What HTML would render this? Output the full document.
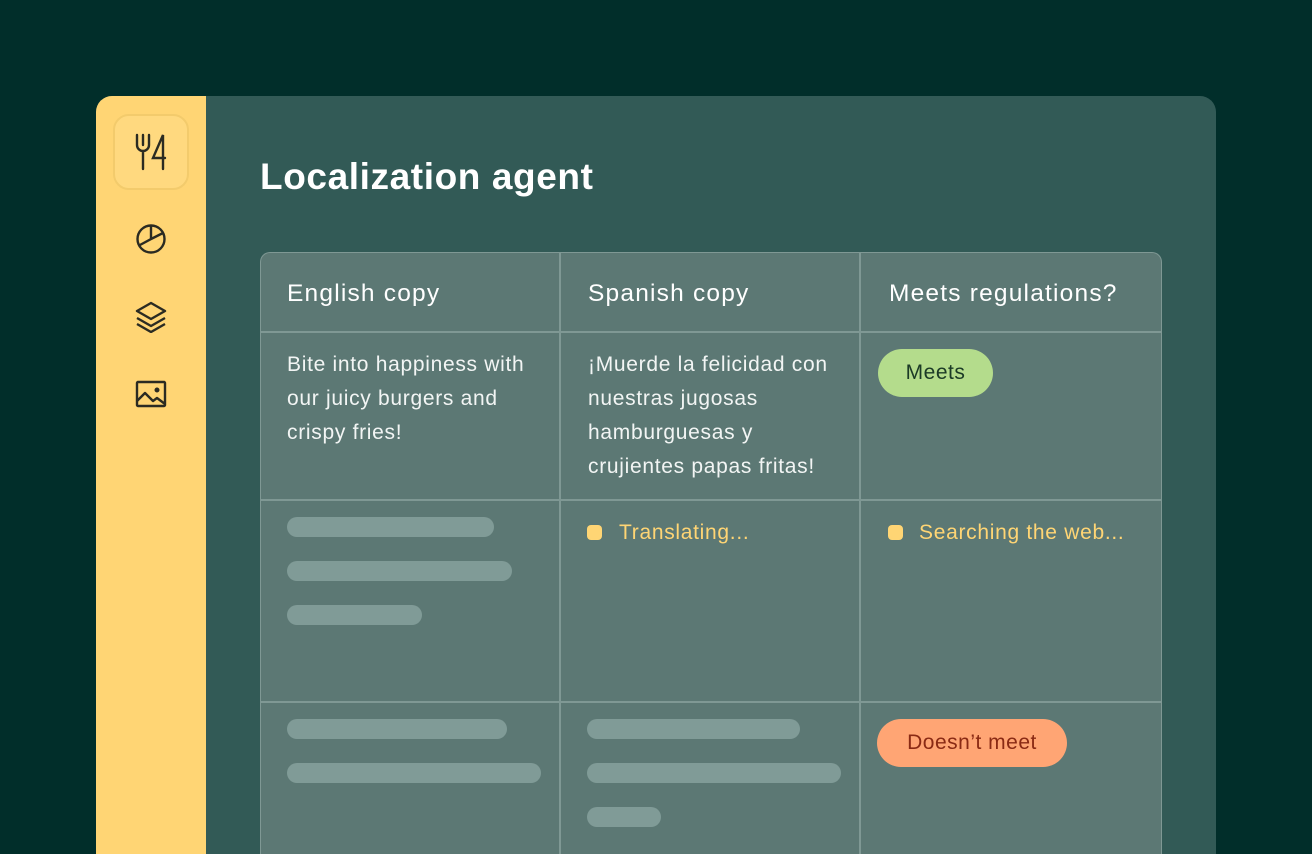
<!DOCTYPE html><html><head><style>
*{margin:0;padding:0;box-sizing:border-box}
html,body{width:1312px;height:854px;overflow:hidden}
body{background:#012e2a;position:relative;font-family:"Liberation Sans",sans-serif}
.card{position:absolute;left:96px;top:96px;width:1120px;height:758px;border-radius:16px 16px 0 0;background:#325a56;overflow:hidden}
.side{position:absolute;left:0;top:0;width:110px;height:758px;background:#ffd574}
.sel{position:absolute;left:17px;top:18px;width:76px;height:76px;border-radius:16px;background:#ffd97f;border:2px solid #f3cb6c}
.ic{position:absolute}
h1{position:absolute;left:164px;top:60px;color:#fff;font-size:37px;font-weight:bold;letter-spacing:0.6px}
.t{position:absolute;left:164px;top:156px;width:902px;height:602px;background:#5c7874;border:1.5px solid #7f9894;border-bottom:none;border-radius:10px 10px 0 0}
.v{position:absolute;top:0;bottom:0;width:1.5px;background:#7f9894}
.h{position:absolute;left:0;right:0;height:1.5px;background:#7f9894}
.tx{position:absolute;color:#f2f5f4;font-size:21px;line-height:34px;letter-spacing:0.7px;white-space:nowrap}
.hd{font-size:24.5px;color:#fff;letter-spacing:1.2px}
.bar{position:absolute;height:20px;border-radius:10px;background:#809b97}
.y{position:absolute;color:#ffd574;font-size:21px;letter-spacing:0.7px}
.dot{position:absolute;width:15px;height:15px;border-radius:4px;background:#ffd574}
.pill{position:absolute;height:48px;border-radius:24px;font-size:21px;line-height:48px;text-align:center;letter-spacing:0.5px}
</style></head><body>
<div class="card">
<div class="side">
<div class="sel"></div>
<svg class="ic" style="left:38px;top:36px" width="34" height="40" viewBox="0 0 34 40" fill="none" stroke="#2b2b22" stroke-width="2.4" stroke-linecap="round"><path d="M3 3v10a6 6 0 0 0 12 0V3M9 3v10M9 19v18M29 37V3L19 26h12"/></svg>
<svg class="ic" style="left:39px;top:127px" width="32" height="32" viewBox="0 0 32 32" fill="none" stroke="#2b2b22" stroke-width="2.4"><circle cx="16" cy="16" r="13.5"/><path d="M16 2.5V16L4 22.5M16 16l12-6"/></svg>
<svg class="ic" style="left:38px;top:205px" width="34" height="32" viewBox="0 0 34 32" fill="none" stroke="#2b2b22" stroke-width="2.4" stroke-linejoin="round"><path d="M17 2L3 10l14 8 14-8zM3 17l14 8 14-8M3 23l14 8 14-8"/></svg>
<svg class="ic" style="left:39px;top:284px" width="32" height="28" viewBox="0 0 32 28" fill="none" stroke="#2b2b22" stroke-width="2.4" stroke-linejoin="round"><rect x="2" y="2" width="28" height="24" rx="1"/><path d="M2 21l8-8 8 8 4-3 8 6"/><circle cx="22" cy="10" r="1.3" fill="#2b2b22"/></svg>
</div>
<h1>Localization agent</h1>
<div class="t">
<div class="v" style="left:298px"></div><div class="v" style="left:598px"></div>
<div class="h" style="top:78px"></div><div class="h" style="top:246px"></div><div class="h" style="top:448px"></div>
<div class="tx hd" style="left:26px;top:24px">English copy</div>
<div class="tx hd" style="left:327px;top:24px">Spanish copy</div>
<div class="tx hd" style="left:628px;top:24px">Meets regulations?</div>
<div class="tx" style="left:26px;top:95px">Bite into happiness with<br>our juicy burgers and<br>crispy fries!</div>
<div class="tx" style="left:327px;top:95px">¡Muerde la felicidad con<br>nuestras jugosas<br>hamburguesas y<br>crujientes papas fritas!</div>
<div class="pill" style="left:617px;top:96px;width:115px;background:#b4dc8c;color:#1b3a26">Meets</div>
<div class="bar" style="left:26px;top:264px;width:207px"></div>
<div class="bar" style="left:26px;top:308px;width:225px"></div>
<div class="bar" style="left:26px;top:352px;width:135px"></div>
<div class="dot" style="left:326px;top:272px"></div><div class="y" style="left:358px;top:268px">Translating...</div>
<div class="dot" style="left:627px;top:272px"></div><div class="y" style="left:658px;top:268px">Searching the web...</div>
<div class="bar" style="left:26px;top:466px;width:220px"></div>
<div class="bar" style="left:26px;top:510px;width:254px"></div>
<div class="bar" style="left:326px;top:466px;width:213px"></div>
<div class="bar" style="left:326px;top:510px;width:254px"></div>
<div class="bar" style="left:326px;top:554px;width:74px"></div>
<div class="pill" style="left:616px;top:466px;width:190px;background:#ffa574;color:#8a2a14">Doesn’t meet</div>
</div>
</div>
</body></html>
